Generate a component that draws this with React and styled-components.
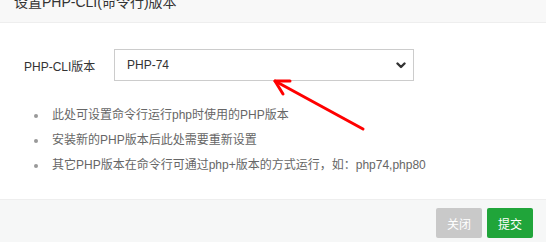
import React from 'react';
import styled, { createGlobalStyle } from 'styled-components';

const GlobalStyle = createGlobalStyle`
  html, body {
    margin: 0;
    padding: 0;
    background: #fff;
    overflow: hidden;
  }
  body {
    font-family: "Liberation Sans", "Noto Sans CJK SC", sans-serif;
    color: #333;
  }
`;

const Layer = styled.div`
  position: relative;
  width: 546px;
  height: 261px;
  margin-top: -19px;
  display: flex;
  flex-direction: column;
`;

const Title = styled.div`
  height: 41px;
  line-height: 42px;
  padding: 0 80px 0 14px;
  background: #f8f8f8;
  border-bottom: 1px solid #eee;
  font-size: 14px;
  color: #333;
  white-space: nowrap;
  overflow: hidden;
`;

const Body = styled.div`
  padding: 26px 0 21px 24px;
`;

const Row = styled.div`
  display: flex;
  align-items: center;
  height: 32px;
`;

const Label = styled.label`
  width: 90px;
  font-size: 12px;
  color: #333;
`;

const SelectWrap = styled.div`
  position: relative;
  width: 300px;
  height: 32px;
`;

const Select = styled.select`
  appearance: none;
  -webkit-appearance: none;
  width: 100%;
  height: 100%;
  box-sizing: border-box;
  border: 1px solid #ccc;
  border-radius: 0;
  background: #fff;
  padding: 0 30px 0 12px;
  font-family: "Liberation Sans", "Noto Sans CJK SC", sans-serif;
  font-size: 12px;
  color: #333;
  outline: none;
`;

const Chevron = styled.svg`
  position: absolute;
  right: 8px;
  top: 13px;
  pointer-events: none;
`;

const Tips = styled.ul`
  list-style: none;
  margin: 22px 0 0;
  padding: 0 0 0 10px;
`;

const Tip = styled.li`
  position: relative;
  height: 25px;
  line-height: 25px;
  padding-left: 18px;
  font-size: 12px;
  color: #666;
  white-space: nowrap;

  &::before {
    content: '';
    position: absolute;
    left: 0;
    top: 11px;
    width: 4px;
    height: 4px;
    border-radius: 50%;
    background: #999;
  }
`;

const Footer = styled.div`
  flex: 1;
  display: flex;
  justify-content: flex-end;
  align-items: flex-start;
  gap: 5px;
  padding: 8px 13px 0;
  background: #f6f7f7;
  border-top: 1px solid #eee;
`;

const Button = styled.button`
  height: 30px;
  padding: 0 11px;
  border: none;
  border-radius: 2px;
  font-family: "Liberation Sans", "Noto Sans CJK SC", sans-serif;
  font-size: 12px;
  color: #fff;
  background: ${({ primary }) => (primary ? '#20a53a' : '#c9c9c9')};
  cursor: pointer;
`;

const Arrow = styled.svg`
  position: absolute;
  left: 0;
  top: 19px;
  pointer-events: none;
`;

const tips = [
  '此处可设置命令行运行php时使用的PHP版本',
  '安装新的PHP版本后此处需要重新设置',
  '其它PHP版本在命令行可通过php+版本的方式运行，如：php74,php80',
];

export default function App() {
  return (
    <>
      <GlobalStyle />
      <Layer>
        <Title>设置PHP-CLI(命令行)版本</Title>
        <Body>
          <Row>
            <Label>PHP-CLI版本</Label>
            <SelectWrap>
              <Select defaultValue="74">
                <option value="74">PHP-74</option>
                <option value="80">PHP-80</option>
              </Select>
              <Chevron width="10" height="7" viewBox="0 0 10 7">
                <path d="M1.5 1.5 L5 5 L8.5 1.5" fill="none" stroke="#333" strokeWidth="2.4" strokeLinecap="round" strokeLinejoin="round" />
              </Chevron>
            </SelectWrap>
          </Row>
          <Tips>
            {tips.map((t) => (
              <Tip key={t}>{t}</Tip>
            ))}
          </Tips>
        </Body>
        <Footer>
          <Button>关闭</Button>
          <Button primary>提交</Button>
        </Footer>
        <Arrow width="546" height="242" viewBox="0 0 546 242">
          <g fill="none" stroke="#ff0000" strokeWidth="3" strokeLinecap="round" strokeLinejoin="round">
            <path d="M363 129 L275 81" />
            <path d="M290 81 L275 81 L283 94" />
          </g>
        </Arrow>
      </Layer>
    </>
  );
}
